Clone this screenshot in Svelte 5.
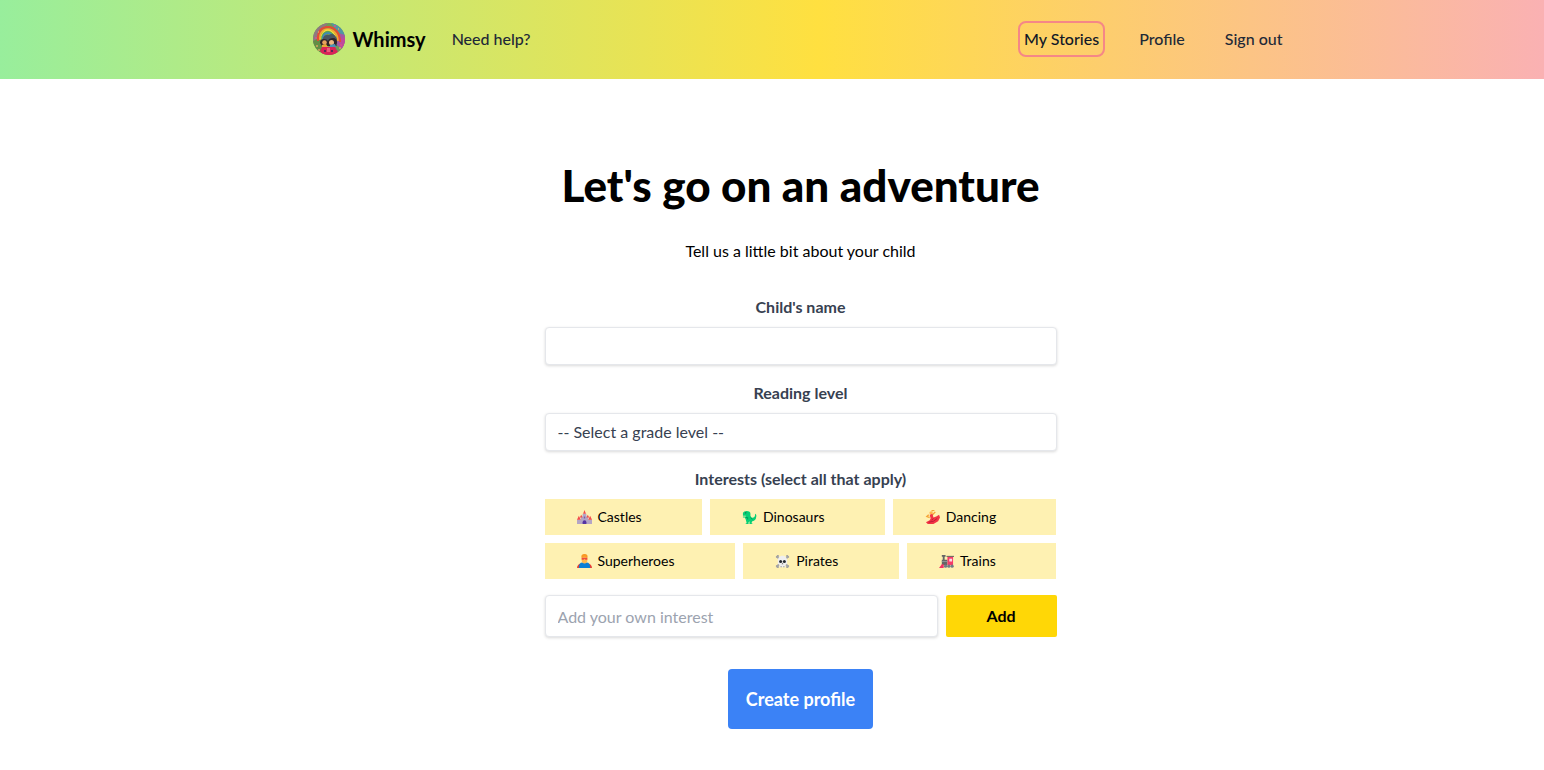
<script lang="ts">
  type Icon = "castle" | "dinosaur" | "dancer" | "hero" | "skull" | "train";

  interface Interest {
    label: string;
    icon?: Icon;
  }

  let interests = $state<Interest[]>([
    { label: "Castles", icon: "castle" },
    { label: "Dinosaurs", icon: "dinosaur" },
    { label: "Dancing", icon: "dancer" },
    { label: "Superheroes", icon: "hero" },
    { label: "Pirates", icon: "skull" },
    { label: "Trains", icon: "train" },
  ]);

  const gradeLevels = ["Kindergarten", "1st grade", "2nd grade", "3rd grade"];

  let childName = $state("");
  let readingLevel = $state("");
  let selected = $state<string[]>([]);
  let customInterest = $state("");

  function addInterest() {
    const label = customInterest.trim();
    if (!label) return;
    if (!interests.some((interest) => interest.label === label)) {
      interests.push({ label });
    }
    if (!selected.includes(label)) {
      selected.push(label);
    }
    customInterest = "";
  }
</script>

<header class="site-header">
  <nav class="nav">
    <div class="nav-group">
      <a class="brand" href="#home">
        <svg class="logo" viewBox="0 0 32 32" aria-hidden="true">
          <clipPath id="logo-clip"><circle cx="16" cy="16" r="16" /></clipPath>
          <g clip-path="url(#logo-clip)">
            <rect width="32" height="32" fill="#6f9a59" />
            <path d="M0 0h15L4 13 0 25z" fill="#8f7a80" />
            <path d="M18 0h14v14L23 7z" fill="#5295a5" />
            <path d="M25 10l7 2v17l-8-7z" fill="#a655a4" />
            <path d="M26 17l6-3v9l-5 2z" fill="#c04a9c" />
            <path d="M0 18l7-3 3 8-4 9H0z" fill="#648e45" />
            <path d="M5 18C4 8 9 4 15 4s12 5 12 15" fill="none" stroke="#e84932" stroke-width="2" />
            <path d="M7 17C6 10 10 6 15 6s10 5 10 12" fill="none" stroke="#ff9f2d" stroke-width="1.6" />
            <path d="M8 16c0-6 4-9 7-9s8 4 8 10" fill="none" stroke="#f4dc3d" stroke-width="1.4" />
            <path d="M9 16c0-5 3-7 6-7s6 3 7 8" fill="none" stroke="#55a851" stroke-width="1.4" />
            <path d="M10 16c0-4 2-6 5-6s5 3 6 7" fill="none" stroke="#3f83c4" stroke-width="1.6" />
            <path d="M10 15q2-4 6-3 5-3 8 4v7H9z" fill="#4a5560" />
            <path d="M7 20q0-4 4-4 3 0 4 2 1-3 5-3 4 0 4 5l-2 3H9z" fill="#302329" />
            <circle cx="11.5" cy="19.5" r="2.3" fill="#e7a15e" />
            <circle cx="18.5" cy="19.5" r="2.5" fill="#edb780" />
            <path d="M9 22l4-1 2 3H9z" fill="#e8a735" />
            <path d="M17 22l5-1 1 3h-6z" fill="#4b92b5" />
            <path d="M9 24h13l3 5-4 3H10l-3-4z" fill="#d92458" />
            <path d="M11 27h2v2h-2zM18 27h2v2h-2z" fill="#5a2b57" />
            <path d="M14 25h3v4h-3z" fill="#ed5c7b" />
            <path d="M3 23h2M5 27h2M25 6h1M26 25h2M5 9h1" stroke="#d9a75e" stroke-width="1.4" />
            <path d="M2 15h2M21 3h2M27 22h2M3 28h2" stroke="#dc4e91" stroke-width="1.6" />
          </g>
        </svg>
        <span>Whimsy</span>
      </a>
      <a class="nav-link" href="#help">Need help?</a>
    </div>
    <div class="nav-group account">
      <a class="nav-link current" href="#stories">My Stories</a>
      <a class="nav-link" href="#profile">Profile</a>
      <a class="nav-link" href="#signout">Sign out</a>
    </div>
  </nav>
</header>

<main class="page">
  <h1>Let's go on an adventure</h1>
  <p class="intro">Tell us a little bit about your child</p>

  <form onsubmit={(event) => event.preventDefault()}>
    <div class="field">
      <label class="field-label" for="child-name">Child's name</label>
      <input class="control" id="child-name" type="text" bind:value={childName} />
    </div>

    <div class="field">
      <label class="field-label" for="reading-level">Reading level</label>
      <select class="control" id="reading-level" bind:value={readingLevel}>
        <option value="">-- Select a grade level --</option>
        {#each gradeLevels as grade}
          <option value={grade}>{grade}</option>
        {/each}
      </select>
    </div>

    <fieldset>
      <legend class="field-label">Interests (select all that apply)</legend>
      <div class="interests">
        {#each interests as interest}
          <label class="interest" class:selected={selected.includes(interest.label)}>
            <input type="checkbox" value={interest.label} bind:group={selected} />
            {#if interest.icon}
              {@render interestIcon(interest.icon)}
            {/if}
            <span>{interest.label}</span>
          </label>
        {/each}
      </div>
    </fieldset>

    <div class="custom-interest">
      <input
        class="control"
        type="text"
        placeholder="Add your own interest"
        aria-label="Add your own interest"
        bind:value={customInterest}
      />
      <button class="add" type="button" onclick={addInterest}>Add</button>
    </div>

    <button class="create" type="submit">Create profile</button>
  </form>
</main>

{#snippet interestIcon(icon: Icon)}
  <svg class="interest-icon" viewBox="0 0 16 16" aria-hidden="true">
    {#if icon === "castle"}
      <path d="M0 15V10h4V7h2V4h4v3h2v3h4v5z" fill="#b4a5c6" />
      <path d="M8 0l1.5 4h-3zM4.500 5l1.500 3H3zM11.500 5l1.500 3h-3zM2 6l2 4.500H0zM14 6l2 4.500h-4z" fill="#f34b4b" />
      <path d="M6 15v-2a2 2 0 0 1 4 0v2z" fill="#5534a3" />
      <path d="M7.300 7h1.400v2H7.300z" fill="#795aa5" />
    {:else if icon === "dinosaur"}
      <path d="M1 3q1-2 4-2 4 0 4 3v2q1 3 3 2 2 0 2-4 2 1 1 4 0 3-4 4l-1 2h1v1H8v-3l-1 1v2H4v-1h1l-1-4-1-2H1V7h3V6H1z" fill="#08cf75" />
      <path d="M4 8h2v2M9 8l2 2" stroke="#00995c" stroke-width="1" fill="none" />
      <circle cx="4" cy="3" r=".7" fill="#24443d" />
    {:else if icon === "dancer"}
      <circle cx="6.500" cy="3" r="1.800" fill="#ffb44f" />
      <path d="M7 1l3-1M4 5l-2 2 3 1M8 5l3-3" fill="none" stroke="#f6a536" stroke-width="1.500" />
      <path d="M5 5l3-1 1 4 3-1 3-2 1 3-2 4-5 3H3l-2-2 4-2 1-2z" fill="#f23444" />
      <path d="M4 13l5-1 4-3M9 9l-2 2" stroke="#bb173a" fill="none" />
    {:else if icon === "hero"}
      <path d="M0 15c0-3 2-5 5-5h6c3 0 5 2 5 5z" fill="#e83f38" />
      <path d="M2 15c0-4 1-6 4-6h4c3 0 4 2 4 6z" fill="#087fd5" />
      <rect x="5" y="1" width="6" height="9" rx="3" fill="#ffb84c" />
      <path d="M5 4c-1-3 1-4 3-4s4 1 3 4l-2-1H7z" fill="#f99a24" />
      <path d="M5 4h6v2H9L8 5 7 6H5z" fill="#ed4b41" />
    {:else if icon === "skull"}
      <path d="M2 3l12 10M14 3L2 13" stroke="#a8a8a8" stroke-width="2" />
      <path d="M1 3h2V1M13 1v2h2M1 13h2v2M13 15v-2h2" fill="none" stroke="#a3a3a3" stroke-width="2" />
      <path d="M3 7c0-7 10-7 10 0v3l-2 2v2H5v-2l-2-2z" fill="#efefef" />
      <circle cx="6" cy="8" r="1.6" fill="#262b31" />
      <circle cx="10" cy="8" r="1.6" fill="#262b31" />
      <path d="M8 9l1 2H7zM6 13h1v1H6zM9 13h1v1H9z" fill="#737373" />
    {:else}
      <path d="M3 1h4v2H6v3h3v6H3V6h1V3H3z" fill="#666" />
      <path d="M9 3h6v9H9z" fill="#f53c69" />
      <path d="M11 5h3v3h-3z" fill="#f9dce6" />
      <path d="M8 2h8v1H8z" fill="#555" />
      <path d="M0 15l3-4h2v4z" fill="#f23362" />
      <path d="M3 8h6" stroke="#8c9499" />
      <circle cx="7" cy="13" r="1.700" fill="#727b85" />
      <circle cx="10.500" cy="13" r="1.700" fill="#727b85" />
      <circle cx="14" cy="13" r="1.700" fill="#727b85" />
    {/if}
  </svg>
{/snippet}

<style>
  :global(body) {
    margin: 0;
    background: #fff;
    color: #000;
    font-family: Lato, "Liberation Sans", sans-serif;
    font-size: 16px;
    line-height: 24px;
  }

  .site-header {
    padding-left: 57px;
    background: linear-gradient(to right, #98ee9c, #ffe040 53%, #fab1b3);
  }

  .nav {
    display: flex;
    align-items: center;
    justify-content: space-between;
    box-sizing: border-box;
    max-width: 1024px;
    min-height: 79px;
    margin: 0 auto;
    padding: 0 24px 2px;
  }

  .nav-group {
    display: flex;
    align-items: center;
    gap: 20px;
  }

  .account {
    gap: 28px;
  }

  .brand {
    display: flex;
    align-items: center;
    gap: 8px;
    color: #000;
    font-size: 20px;
    font-weight: 700;
    text-decoration: none;
  }

  .logo {
    width: 32px;
    height: 32px;
  }

  .nav-link {
    padding: 4px;
    border: 2px solid transparent;
    border-radius: 8px;
    color: #1f2937;
    font-weight: 500;
    text-decoration: none;
  }

  .nav-link.current {
    border-color: #f58787;
    color: #111827;
  }

  .page {
    padding: 80px 16px 40px 73px;
    text-align: center;
  }

  h1 {
    margin: 0;
    font-size: 44px;
    font-weight: 900;
    line-height: 52px;
  }

  .intro {
    margin: 28px 0 32px;
  }

  form {
    max-width: 512px;
    margin: 0 auto;
  }

  .field {
    margin-bottom: 16px;
  }

  .field-label {
    display: block;
    width: 100%;
    margin-bottom: 8px;
    padding: 0;
    color: #374151;
    font-weight: 700;
  }

  .control {
    display: block;
    box-sizing: border-box;
    width: 100%;
    height: 38px;
    padding: 0 12px;
    background: #fff;
    border: 1px solid #e5e7eb;
    border-radius: 4px;
    box-shadow: 0 1px 3px rgba(0, 0, 0, 0.15);
    color: #374151;
    font: inherit;
    appearance: none;
  }

  .control::placeholder {
    color: #9ca3af;
    opacity: 1;
  }

  fieldset {
    min-width: 0;
    margin: 0;
    padding: 0;
    border: 0;
  }

  .interests {
    display: flex;
    flex-wrap: wrap;
    gap: 8px;
  }

  .interest {
    position: relative;
    display: flex;
    flex: 1 0 auto;
    align-items: center;
    gap: 6px;
    padding: 8px 32px;
    background: #fef1b2;
    font-size: 14px;
    line-height: 20px;
    cursor: pointer;
  }

  .interest.selected {
    background: #ffd908;
  }

  .interest input {
    position: absolute;
    opacity: 0;
  }

  .interest-icon {
    width: 15px;
    height: 15px;
  }

  .custom-interest {
    display: flex;
    gap: 8px;
    margin: 16px 0 32px;
  }

  .custom-interest .control {
    flex: 1;
    height: 42px;
  }

  button {
    border: 0;
    border-radius: 4px;
    font: inherit;
    font-weight: 700;
    cursor: pointer;
  }

  .add {
    flex: 0 0 111px;
    border-radius: 2px;
    background: #ffd706;
    color: #000;
  }

  .create {
    padding: 16px 18px;
    background: #3b82f6;
    color: #fff;
    font-size: 18px;
    line-height: 28px;
  }
</style>
